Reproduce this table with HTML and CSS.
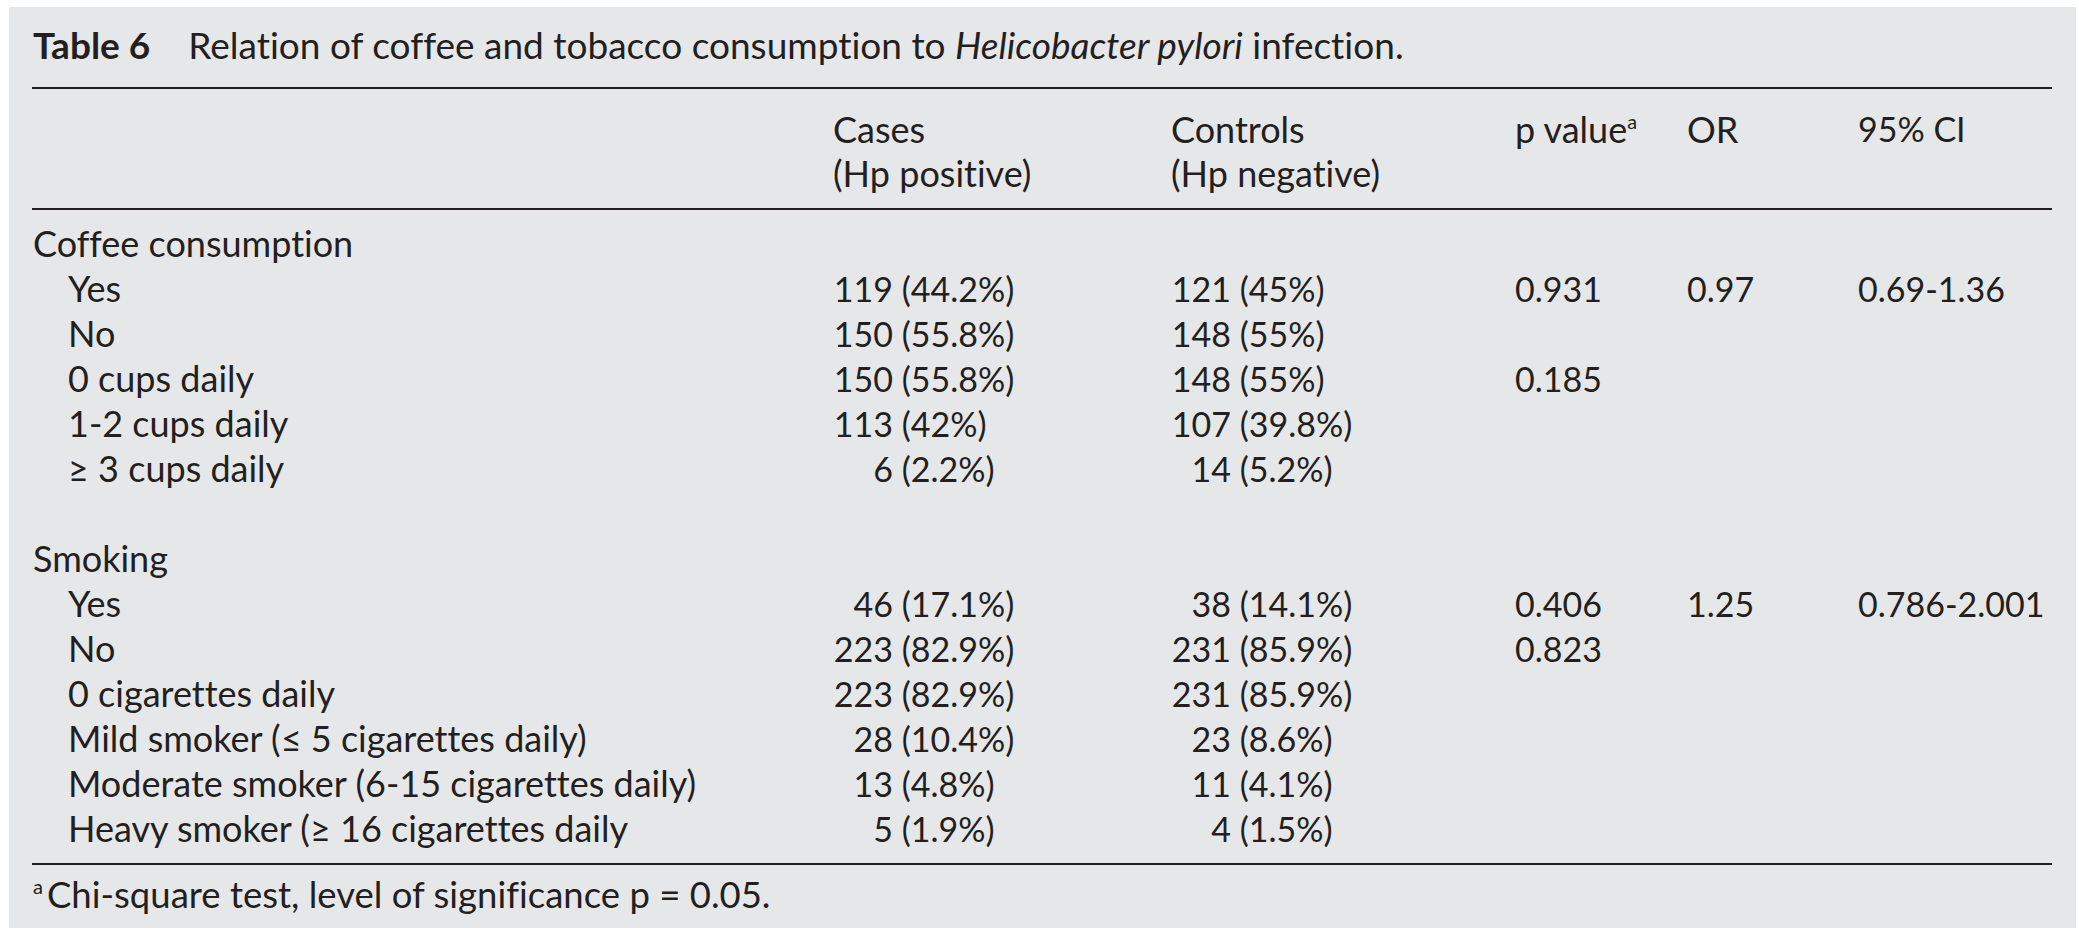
FILE: index.html
```html
<!DOCTYPE html>
<html lang="en">
<head>
<meta charset="utf-8">
<title>Table 6</title>
<link rel="stylesheet" href="styles.css">
</head>
<body>
<div class="panel">
  <div class="caption"><span class="label">Table 6</span><span class="caption-text">Relation of coffee and tobacco consumption to <i>Helicobacter pylori</i> infection.</span></div>
  <div class="thead">
    <div class="row head">
      <div class="cell"></div>
      <div class="cell">Cases<br>(Hp positive)</div>
      <div class="cell">Controls<br>(Hp negative)</div>
      <div class="cell">p value<sup>a</sup></div>
      <div class="cell">OR</div>
      <div class="cell ci-head">95% CI</div>
    </div>
  </div>
  <div class="tbody">
    <div class="row"><div class="cell">Coffee consumption</div></div>
    <div class="row">
      <div class="cell sub">Yes</div>
      <div class="cell num"><span class="n">119</span> (44.2%)</div>
      <div class="cell num"><span class="n">121</span> (45%)</div>
      <div class="cell num">0.931</div>
      <div class="cell num">0.97</div>
      <div class="cell num">0.69-1.36</div>
    </div>
    <div class="row">
      <div class="cell sub">No</div>
      <div class="cell num"><span class="n">150</span> (55.8%)</div>
      <div class="cell num"><span class="n">148</span> (55%)</div>
    </div>
    <div class="row">
      <div class="cell sub">0 cups daily</div>
      <div class="cell num"><span class="n">150</span> (55.8%)</div>
      <div class="cell num"><span class="n">148</span> (55%)</div>
      <div class="cell num">0.185</div>
    </div>
    <div class="row">
      <div class="cell sub">1-2 cups daily</div>
      <div class="cell num"><span class="n">113</span> (42%)</div>
      <div class="cell num"><span class="n">107</span> (39.8%)</div>
    </div>
    <div class="row">
      <div class="cell sub">≥ 3 cups daily</div>
      <div class="cell num"><span class="n">6</span> (2.2%)</div>
      <div class="cell num"><span class="n">14</span> (5.2%)</div>
    </div>
    <div class="row blank"></div>
    <div class="row"><div class="cell">Smoking</div></div>
    <div class="row">
      <div class="cell sub">Yes</div>
      <div class="cell num"><span class="n">46</span> (17.1%)</div>
      <div class="cell num"><span class="n">38</span> (14.1%)</div>
      <div class="cell num">0.406</div>
      <div class="cell num">1.25</div>
      <div class="cell num">0.786-2.001</div>
    </div>
    <div class="row">
      <div class="cell sub">No</div>
      <div class="cell num"><span class="n">223</span> (82.9%)</div>
      <div class="cell num"><span class="n">231</span> (85.9%)</div>
      <div class="cell num">0.823</div>
    </div>
    <div class="row">
      <div class="cell sub">0 cigarettes daily</div>
      <div class="cell num"><span class="n">223</span> (82.9%)</div>
      <div class="cell num"><span class="n">231</span> (85.9%)</div>
    </div>
    <div class="row">
      <div class="cell sub">Mild smoker (≤ 5 cigarettes daily)</div>
      <div class="cell num"><span class="n">28</span> (10.4%)</div>
      <div class="cell num"><span class="n">23</span> (8.6%)</div>
    </div>
    <div class="row">
      <div class="cell sub">Moderate smoker (6-15 cigarettes daily)</div>
      <div class="cell num"><span class="n">13</span> (4.8%)</div>
      <div class="cell num"><span class="n">11</span> (4.1%)</div>
    </div>
    <div class="row">
      <div class="cell sub">Heavy smoker (≥ 16 cigarettes daily</div>
      <div class="cell num"><span class="n">5</span> (1.9%)</div>
      <div class="cell num"><span class="n">4</span> (1.5%)</div>
    </div>
  </div>
  <div class="footnote"><sup>a</sup>Chi-square test, level of significance p = 0.05.</div>
</div>
</body>
</html>
```
FILE: styles.css
```css
html, body {
  margin: 0;
  padding: 0;
  background: #ffffff;
}

body {
  font-family: Lato, "Open Sans", "Liberation Sans", sans-serif;
  font-size: 36px;
  color: #231f20;
  font-variant-ligatures: none;
  font-feature-settings: "liga" 0, "clig" 0;
}

.panel {
  margin: 7px 3px 9px 9px;
  height: 921px;
  box-sizing: border-box;
  background: #e6e7e9;
  padding: 16px 24px 0 23px;
}

.caption {
  font-size: 37px;
  line-height: 44px;
  padding-left: 1px;
  margin-bottom: 20px;
}

.caption .label {
  font-weight: 700;
  margin-right: 38px;
}

.thead {
  border-top: 2px solid #231f20;
  border-bottom: 2px solid #231f20;
  padding: 18px 0 13px;
}

.row {
  display: grid;
  grid-template-columns: 800px 338px 344px 172px 171px 1fr;
  line-height: 45px;
  height: 45px;
}

.row.head {
  line-height: 44px;
  height: 88px;
}

.cell.ci-head {
  font-size: 34px;
}

.tbody {
  padding: 11px 0 12px;
  border-bottom: 2px solid #231f20;
}

.cell {
  white-space: nowrap;
  padding-left: 1px;
}

.cell.sub {
  padding-left: 36px;
}

.cell.num {
  font-size: 34px;
}

.n {
  display: inline-block;
  width: 60px;
  text-align: right;
}

sup {
  font-size: 0.55em;
  line-height: 0;
  vertical-align: 0.7em;
}

.footnote {
  font-size: 36.5px;
  line-height: 44px;
  padding-top: 7px;
  padding-left: 1px;
}

.footnote sup {
  margin-right: 4px;
}
```
